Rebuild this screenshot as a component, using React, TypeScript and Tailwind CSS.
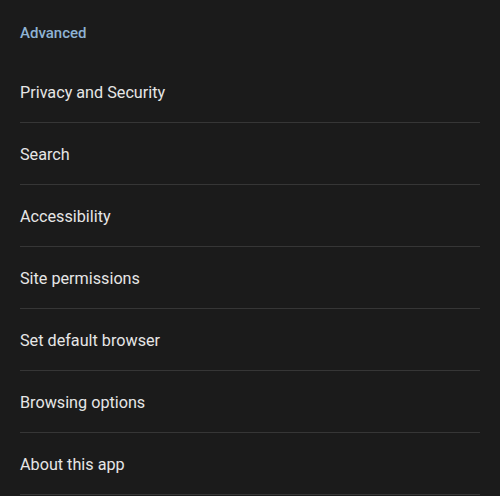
const items = [
  "Privacy and Security",
  "Search",
  "Accessibility",
  "Site permissions",
  "Set default browser",
  "Browsing options",
  "About this app",
];

export default function App() {
  return (
    <div className="min-h-[496px] w-[500px] bg-[#1b1b1b] font-['Roboto',sans-serif]">
      <div className="flex h-[61px] items-center px-5 pt-[6px]">
        <span className="text-[15px] font-medium text-[#8fb3d4]">Advanced</span>
      </div>
      <ul className="pl-5 pr-5">
        {items.map((item) => (
          <li
            key={item}
            className="flex h-[62px] items-center border-b border-[#363636] pt-[4px] text-[16.2px] text-[#e6e6e6]"
          >
            {item}
          </li>
        ))}
      </ul>
    </div>
  );
}
